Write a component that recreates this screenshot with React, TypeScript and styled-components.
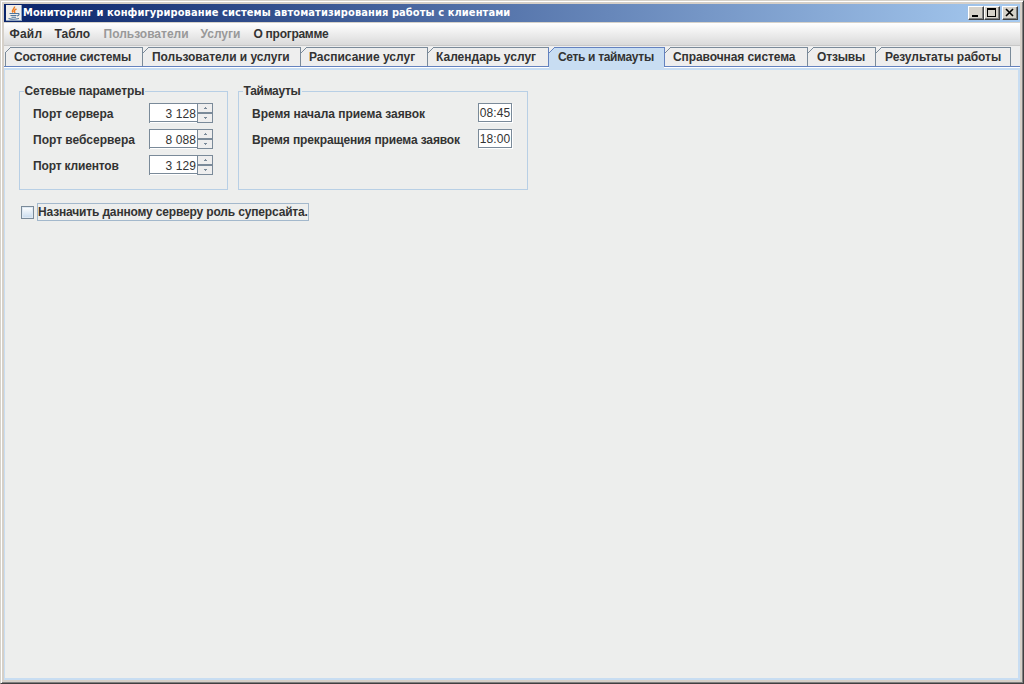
import React from "react";
import styled, { createGlobalStyle, css } from "styled-components";

const Global = createGlobalStyle`
  * { box-sizing: border-box; }
  body { margin: 0; background: #d6d2ca; }
  body, button, input { font: bold 12px/15px "Liberation Sans", Arial, sans-serif; color: #333; }
`;

const Frame = styled.div`
  width: 1024px; height: 684px; overflow: hidden;
  display: flex; flex-direction: column;
  background: #d6d0c8;
  border: 1px solid; border-color: #d6d2ca #404040 #404040 #d6d2ca;
  box-shadow: inset 1px 1px #fff, inset -1px -1px #808080;
  padding: 3px;
`;
const TitleBar = styled.header`
  height: 18px; flex: none; display: flex; align-items: center;
  padding: 0 2px;
  background: linear-gradient(90deg, #0a246a, #a6caf0);
  color: #fff;
`;
const Title = styled.h1`
  flex: 1; margin: 0 0 0 1px; white-space: nowrap;
  font: bold 11px/16px "DejaVu Sans Condensed", "DejaVu Sans", Tahoma, sans-serif;
`;
const Text = styled.span<{ $track?: number }>`
  white-space: nowrap; letter-spacing: ${p => p.$track ?? 0}px;
`;
const WindowButton = styled.button<{ $gap?: boolean }>`
  width: 16px; height: 14px; padding: 0; flex: none; display: block;
  margin-left: ${p => (p.$gap ? 2 : 0)}px;
  background: #d6d2ca; border: 1px solid;
  border-color: #fff #404040 #404040 #fff;
  box-shadow: inset -1px -1px #808080;
  svg { display: block; }
`;
const MenuBar = styled.nav`
  height: 24px; flex: none; display: flex; align-items: center;
  padding: 0 0 0 5.5px; gap: 12px;
  background: linear-gradient(#fff, #dadada);
  border-top: 1px solid #d6d2ca; border-bottom: 1px solid #c8c8c8;
`;
const MenuItem = styled.span<{ $width: number; $off?: boolean }>`
  width: ${p => p.$width}px; white-space: nowrap;
  color: ${p => (p.$off ? "#999" : "#333")};
`;
const Tabs = styled.div`
  height: 21px; flex: none; display: flex; padding: 1px 0 0 1px;
  background: #eee; border-bottom: 1px solid #6382bf;
`;
const TabBox = styled.div<{ $width: number; $pad: number; $active?: boolean; $first?: boolean; $before?: boolean }>`
  position: relative; width: ${p => p.$width}px; height: 19px; flex: none;
  padding: 2px 0 0 ${p => p.$pad}px;
  border-top: 1px solid #7a8a99; border-right: 1px solid #7a8a99;
  ${p => p.$first && css`border-left: 1px solid #7a8a99;`}
  ${p => p.$before && css`border-right-color: #6382bf;`}
  ${p => p.$active && css`
    background: #c8ddf2; border-color: #6382bf; height: 20px;
    &::after { content: ""; position: absolute; left: 0; right: 0; bottom: -2px; height: 2px; background: #c8ddf2; }
  `}
`;
const Notch = styled.svg<{ $first?: boolean }>`
  position: absolute; top: -1px; left: ${p => (p.$first ? -1 : 0)}px; display: block;
`;
const PaneShell = styled.div`flex: 1; display: flex; flex-direction: column; background: #fff;`;
const Pane = styled.main`
  flex: 1; display: flex; flex-direction: column;
  background: #edeeed; border: 2px solid #c8ddf2; border-left-width: 1px;
  margin-top: 1px;
  padding: 14px 0 0 14px;
`;
const Groups = styled.div`display: flex; gap: 10px;`;
const Group = styled.fieldset<{ $width: number }>`
  width: ${p => p.$width}px; height: 106px; margin: 0; padding: 5px 14px 0 13px;
  border: 1px solid #b8cfe5; min-width: 0;
  display: flex; flex-direction: column;
`;
const Legend = styled.legend`
  height: 14px; line-height: 14px; padding: 0 1px; margin-left: -9.5px; white-space: nowrap;
`;
const Row = styled.div`
  height: 20px; margin-bottom: 6px; display: flex; align-items: center; justify-content: space-between;
`;
const RowLabel = styled(Text)`line-height: 16px; padding-top: 1px;`;
const SpinField = styled.div`
  width: 48px; height: 20px; padding-right: 1px;
  font-weight: normal; line-height: 20px; text-align: right; white-space: nowrap;
  background: #fff; border: 1px solid #7a8a99; border-bottom: 0; border-right: 0;
  box-shadow: inset 0 -1px #fff, inset 0 -2px #7a8a99;
`;
const TimeField = styled.div`
  width: 34px; height: 19px; margin-right: 1px; align-self: flex-start;
  font-weight: normal; line-height: 19px; text-align: center; white-space: nowrap;
  background: #fff; border: 1px solid #7a8a99;
  box-shadow: 1px 1px #fff;
`;
const Spinner = styled.div`display: flex; width: 64px; height: 20px;`;
const Arrows = styled.div`
  width: 16px; height: 20px; display: flex; flex-direction: column; flex: none;
`;
const Arrow = styled.button`
  width: 16px; height: 10px; padding: 0; background: #eee; border: 1px solid #7a8a99; display: block;
  svg { display: block; }
`;
const CheckRow = styled.label`display: flex; align-items: center; margin: 13px 0 0 2px; height: 18px;`;
const Box = styled.span`
  width: 13px; height: 13px; flex: none; border: 1px solid #7a8a99;
  background: linear-gradient(#fff, #c8dbee); box-shadow: inset 0 0 0 1px #dfe9f3;
`;
const Focused = styled.span`
  width: 272px; height: 18px; line-height: 17px; margin-left: 3px; white-space: nowrap;
  border: 1px solid #a3b8cc;
`;

const JavaIcon = () => (
  <svg width="16" height="16" viewBox="0 0 16 16">
    <rect width="16" height="16" fill="#8fa3c0" />
    <rect width="15" height="15" fill="#f1eeea" />
    <path d="M8.500 1.500C9 4 5 4.500 7 7.500M10.500 4C8 5 8 6 9 8" fill="none" stroke="#ee7d22" strokeWidth="1.500" />
    <path d="M3.500 8.500h7.500M11 8.500c3-.5 2.500 2 0 2.500M4.500 10.500h6M5.500 12.200h4.500M2.500 13.500c3 1 7 1 10.500 0" fill="none" stroke="#4f779f" strokeWidth="1.100" />
  </svg>
);

const tabs = [
  { label: "Состояние системы", width: 138, pad: 8, track: -0.13 },
  { label: "Пользователи и услуги", width: 158, pad: 9, track: -0.05 },
  { label: "Расписание услуг", width: 127, pad: 8, track: 0 },
  { label: "Календарь услуг", width: 121, pad: 8, track: 0 },
  { label: "Сеть и таймауты", width: 116, pad: 9, track: -0.33 },
  { label: "Справочная система", width: 143, pad: 8, track: -0.08 },
  { label: "Отзывы", width: 68, pad: 9, track: -0.15 },
  { label: "Результаты работы", width: 135, pad: 9, track: -0.06 },
];
const ACTIVE = 4;

const menu = [
  { label: "Файл", width: 33, track: 0.2 },
  { label: "Табло", width: 37, track: 0 },
  { label: "Пользователи", width: 85, track: 0, off: true },
  { label: "Услуги", width: 41, track: 0, off: true },
  { label: "О программе", width: 76, track: -0.28 },
];

const ports = [
  { label: "Порт сервера", value: "3 128", track: -0.04 },
  { label: "Порт вебсервера", value: "8 088", track: 0 },
  { label: "Порт клиентов", value: "3 129", track: -0.16 },
];
const times = [
  { label: "Время начала приема заявок", value: "08:45", track: -0.03 },
  { label: "Время прекращения приема заявок", value: "18:00", track: -0.13 },
];

export default function App() {
  return (
    <Frame>
      <Global />
      <TitleBar>
        <JavaIcon />
        <Title><Text $track={0.09}>Мониторинг и конфигурирование системы автоматизирования работы с клиентами</Text></Title>
        <WindowButton aria-label="Свернуть"><svg width="14" height="12"><path d="M3 8h6v2H3z" /></svg></WindowButton>
        <WindowButton aria-label="Развернуть"><svg width="14" height="12"><path d="M2 1h9v9H2zM3 3v6h7V3z" fillRule="evenodd" /></svg></WindowButton>
        <WindowButton $gap aria-label="Закрыть"><svg width="14" height="12"><path d="M3 2l7 7M10 2L3 9" stroke="#000" strokeWidth="1.600" /></svg></WindowButton>
      </TitleBar>
      <MenuBar>
        {menu.map(m => <MenuItem key={m.label} $width={m.width} $off={m.off}><Text $track={m.track}>{m.label}</Text></MenuItem>)}
      </MenuBar>
      <Tabs>
        {tabs.map((t, i) => (
          <TabBox key={t.label} $width={t.width} $pad={t.pad} $active={i === ACTIVE} $first={i === 0} $before={i === ACTIVE - 1}>
            <Notch $first={i === 0} width="7" height="7">
              <path d="M0 0h6L0 6z" fill="#eee" />
              <path d="M0 6l6-6" stroke={i === ACTIVE ? "#6382bf" : "#7a8a99"} />
            </Notch>
            <Text $track={t.track}>{t.label}</Text>
          </TabBox>
        ))}
      </Tabs>
      <PaneShell>
        <Pane>
          <Groups>
            <Group $width={209}>
              <Legend><Text $track={-0.14}>Сетевые параметры</Text></Legend>
              {ports.map(p => (
                <Row key={p.label}>
                  <RowLabel $track={p.track}>{p.label}</RowLabel>
                  <Spinner>
                    <SpinField><Text $track={0.1}>{p.value}</Text></SpinField>
                    <Arrows>
                      <Arrow aria-label="Больше"><svg width="14" height="8"><path d="M7 3h1v1h1v1H6V4h1z" fill="#7a8a99" /></svg></Arrow>
                      <Arrow aria-label="Меньше"><svg width="14" height="8"><path d="M6 3h3v1H8v1H7V4H6z" fill="#7a8a99" /></svg></Arrow>
                    </Arrows>
                  </Spinner>
                </Row>
              ))}
            </Group>
            <Group $width={290}>
              <Legend><Text $track={-0.3}>Таймауты</Text></Legend>
              {times.map(t => (
                <Row key={t.label}>
                  <RowLabel $track={t.track}>{t.label}</RowLabel>
                  <TimeField><Text $track={0.1}>{t.value}</Text></TimeField>
                </Row>
              ))}
            </Group>
          </Groups>
          <CheckRow>
            <Box />
            <Focused><Text $track={-0.16}>Назначить данному серверу роль суперсайта.</Text></Focused>
          </CheckRow>
        </Pane>
      </PaneShell>
    </Frame>
  );
}
